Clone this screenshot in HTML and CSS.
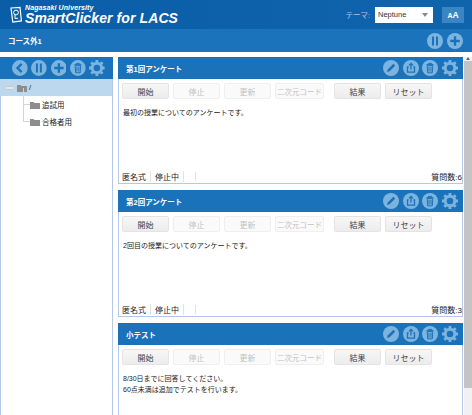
FILE: index.html
```html
<!DOCTYPE html>
<html lang="ja">
<head>
    <meta charset="UTF-8">
    <title>SmartClicker for LACS</title>
    <link rel="stylesheet" href="styles.css">
</head>
<body>
    <svg class="defs" width="0" height="0">
        <symbol id="i-back" viewBox="0 0 16 16">
            <circle cx="8" cy="8" r="8" fill="#7db4de"/>
            <path d="M9.8 3.8 5.6 8l4.2 4.2" fill="none" stroke="#1a72bb" stroke-width="2.4"/>
        </symbol>
        <symbol id="i-pause" viewBox="0 0 16 16">
            <circle cx="8" cy="8" r="8" fill="#7db4de"/>
            <path d="M6 3.5v9M10 3.5v9" fill="none" stroke="#1a72bb" stroke-width="2"/>
        </symbol>
        <symbol id="i-plus" viewBox="0 0 16 16">
            <circle cx="8" cy="8" r="8" fill="#7db4de"/>
            <path d="M8 3.2v9.6M3.2 8h9.6" fill="none" stroke="#1a72bb" stroke-width="2.4"/>
        </symbol>
        <symbol id="i-trash" viewBox="0 0 16 16">
            <circle cx="8" cy="8" r="8" fill="#7db4de"/>
            <path d="M4.5 4.6h7M6.5 4.4V3.4h3v1M5.2 5.6l.5 7.2h4.6l.5-7.2zM7 6.8v4.8M9 6.8v4.8" fill="none" stroke="#1a72bb" stroke-width="1"/>
        </symbol>
        <symbol id="i-gear" viewBox="0 0 16 16">
            <circle cx="8" cy="8" r="4.8" fill="none" stroke="#7db4de" stroke-width="3"/>
            <path d="M8 0v3.5M8 12.5V16M0 8h3.5M12.5 8H16M2.3 2.3l2.5 2.5M11.2 11.2l2.5 2.5M2.3 13.7l2.5-2.5M11.2 4.8l2.5-2.5" fill="none" stroke="#7db4de" stroke-width="2.8"/>
        </symbol>
        <symbol id="i-edit" viewBox="0 0 16 16">
            <circle cx="8" cy="8" r="8" fill="#7db4de"/>
            <path d="M4 12l.7-2.6 5.6-5.6 1.9 1.9-5.6 5.6z" fill="#1a72bb"/>
        </symbol>
        <symbol id="i-share" viewBox="0 0 16 16">
            <circle cx="8" cy="8" r="8" fill="#7db4de"/>
            <path d="M5.6 7H4.5v5.2h7V7h-1.1M8 9.5V3.6M6 5.4l2-2 2 2" fill="none" stroke="#1a72bb" stroke-width="1.3"/>
        </symbol>
        <symbol id="i-folder" viewBox="0 0 10 8">
            <path d="M0 1h3.5l1 1H10v6H0z" fill="#8d8d8d"/>
        </symbol>
    </svg>

    <header class="top-bar">
        <div class="logo">
            <svg class="logo-icon" viewBox="0 0 14 17">
                <path d="M2 1.5 11 .8l1.4 13.6-8.6 1.2z" fill="#0d5fa8" stroke="#fff" stroke-width="1.2"/>
                <circle cx="7" cy="6" r="2.4" fill="none" stroke="#fff"/>
                <path d="M6 8v4l3-.3" fill="none" stroke="#fff"/>
            </svg>
            <div class="logo-text">
                <div class="logo-small">Nagasaki University</div>
                <div class="logo-big">SmartClicker for LACS</div>
            </div>
        </div>
        <div class="theme">
            <span class="theme-label">テーマ:</span>
            <div class="theme-select">Neptune<span class="caret"></span></div>
            <div class="font-btn"><small>A</small>A</div>
        </div>
    </header>

    <div class="course-bar">
        <span class="course-title">コース外1</span>
        <div class="icons">
            <svg class="icon"><use href="#i-pause"/></svg>
            <svg class="icon"><use href="#i-plus"/></svg>
        </div>
    </div>

    <div class="main">
        <aside class="side">
            <div class="side-head">
                <svg class="icon"><use href="#i-back"/></svg>
                <svg class="icon"><use href="#i-pause"/></svg>
                <svg class="icon"><use href="#i-plus"/></svg>
                <svg class="icon"><use href="#i-trash"/></svg>
                <svg class="icon"><use href="#i-gear"/></svg>
            </div>
            <div class="tree-root">
                <span class="minus"></span>
                <svg class="folder"><use href="#i-folder"/></svg>
                <span>/</span>
            </div>
            <div class="tree-row">
                <span class="branch"></span>
                <svg class="folder"><use href="#i-folder"/></svg>
                <span>追試用</span>
            </div>
            <div class="tree-row">
                <span class="branch"></span>
                <svg class="folder"><use href="#i-folder"/></svg>
                <span>合格者用</span>
            </div>
        </aside>

        <div class="list">
            <section class="card">
                <div class="card-head">
                    <span class="card-title">第1回アンケート</span>
                    <div class="icons">
                        <svg class="icon"><use href="#i-edit"/></svg>
                        <svg class="icon"><use href="#i-share"/></svg>
                        <svg class="icon"><use href="#i-trash"/></svg>
                        <svg class="icon"><use href="#i-gear"/></svg>
                    </div>
                </div>
                <div class="toolbar">
                    <button class="btn">開始</button>
                    <button class="btn off">停止</button>
                    <button class="btn off">更新</button>
                    <button class="btn off wide">二次元コード</button>
                    <button class="btn">結果</button>
                    <button class="btn">リセット</button>
                </div>
                <div class="card-text">最初の授業についてのアンケートです。</div>
                <div class="card-foot">
                    <span class="foot-item">匿名式</span>
                    <span class="foot-item">停止中</span>
                    <span class="foot-item empty"></span>
                    <span class="count">質問数:6</span>
                </div>
            </section>

            <section class="card">
                <div class="card-head">
                    <span class="card-title">第2回アンケート</span>
                    <div class="icons">
                        <svg class="icon"><use href="#i-edit"/></svg>
                        <svg class="icon"><use href="#i-share"/></svg>
                        <svg class="icon"><use href="#i-trash"/></svg>
                        <svg class="icon"><use href="#i-gear"/></svg>
                    </div>
                </div>
                <div class="toolbar">
                    <button class="btn">開始</button>
                    <button class="btn off">停止</button>
                    <button class="btn off">更新</button>
                    <button class="btn off wide">二次元コード</button>
                    <button class="btn">結果</button>
                    <button class="btn">リセット</button>
                </div>
                <div class="card-text">2回目の授業についてのアンケートです。</div>
                <div class="card-foot">
                    <span class="foot-item">匿名式</span>
                    <span class="foot-item">停止中</span>
                    <span class="foot-item empty"></span>
                    <span class="count">質問数:3</span>
                </div>
            </section>

            <section class="card">
                <div class="card-head">
                    <span class="card-title">小テスト</span>
                    <div class="icons">
                        <svg class="icon"><use href="#i-edit"/></svg>
                        <svg class="icon"><use href="#i-share"/></svg>
                        <svg class="icon"><use href="#i-trash"/></svg>
                        <svg class="icon"><use href="#i-gear"/></svg>
                    </div>
                </div>
                <div class="toolbar">
                    <button class="btn">開始</button>
                    <button class="btn off">停止</button>
                    <button class="btn off">更新</button>
                    <button class="btn off wide">二次元コード</button>
                    <button class="btn">結果</button>
                    <button class="btn">リセット</button>
                </div>
                <div class="card-text">8/30日までに回答してください。<br>60点未満は追加でテストを行います。</div>
            </section>
        </div>

        <div class="scrollbar">
            <span class="arrow"></span>
            <div class="thumb"></div>
        </div>
    </div>
</body>
</html>
```

FILE: styles.css
```css
html, body {
    margin: 0;
    height: 415px;
    overflow: hidden;
}

body {
    display: flex;
    flex-direction: column;
    background: #fff;
    color: #222;
    font-family: "Liberation Sans", "Noto Sans CJK JP", sans-serif;
    font-size: 7px;
}

.defs {
    display: none;
}

.top-bar {
    height: 29px;
    flex: none;
    display: flex;
    justify-content: space-between;
    align-items: center;
    background: linear-gradient(90deg, #0a5ea8, #0f64ac);
    color: #fff;
}

.logo {
    display: flex;
    align-items: center;
    margin-left: 9px;
    gap: 2px;
}

.logo-icon {
    width: 14px;
    height: 18px;
}

.logo-text {
    font-style: italic;
    font-weight: bold;
}

.logo-small {
    font-size: 7px;
    line-height: 8px;
    letter-spacing: 0.1px;
}

.logo-big {
    font-size: 14px;
    line-height: 13px;
    letter-spacing: 0.1px;
}

.theme {
    display: flex;
    align-items: center;
    margin-right: 8px;
}

.theme-label {
    color: #a9c8e6;
    font-size: 7.5px;
    margin-right: 5px;
}

.theme-select {
    width: 55px;
    height: 16px;
    margin-right: 9px;
    padding-left: 3px;
    background: #fff;
    color: #333;
    font-size: 7.5px;
    line-height: 16px;
    position: relative;
}

.caret {
    position: absolute;
    right: 5px;
    top: 6px;
    border: 3px solid transparent;
    border-top: 4px solid #8a8a8a;
}

.font-btn {
    width: 22px;
    height: 16px;
    background: #3a86c4;
    color: #fff;
    font-weight: bold;
    font-size: 8.5px;
    line-height: 16px;
    text-align: center;
}

.font-btn small {
    font-size: 7px;
}

.course-bar {
    height: 23px;
    flex: none;
    display: flex;
    justify-content: space-between;
    align-items: center;
    padding: 0 9px 0 8px;
    background: #1b73bb;
    color: #fff;
    font-size: 7.5px;
    font-weight: bold;
}

.icons {
    display: flex;
    gap: 3.7px;
}

.icon {
    width: 16px;
    height: 16px;
    display: block;
}

.main {
    flex: 1;
    min-height: 0;
    display: flex;
    margin-top: 5px;
}

.side {
    width: 113px;
    flex: none;
    box-sizing: border-box;
    border-right: 1px solid #b5c8e8;
    border-left: 1px solid #b5c8e8;
    font-size: 7.5px;
}

.side-head {
    height: 22px;
    margin: 0 -1px;
    padding: 0 8px 0 12px;
    display: flex;
    align-items: center;
    gap: 3.5px;
    background: #1a72bb;
}

.tree-root {
    height: 17px;
    margin-left: -1px;
    padding-left: 6px;
    display: flex;
    align-items: center;
    background: #bcd8ee;
    position: relative;
}

.tree-root::before {
    content: "";
    position: absolute;
    left: 9px;
    top: 0;
    height: 6px;
    border-left: 1px solid #d5d5d5;
}

.tree-root span:last-child {
    margin-left: 2px;
}

.minus {
    width: 7px;
    height: 4px;
    margin-right: 4px;
    background: #e6e6e6;
    border-top: 1px solid #c9c9c9;
    border-bottom: 1px solid #c9c9c9;
    box-sizing: border-box;
}

.folder {
    width: 10px;
    height: 8px;
    flex: none;
}

.tree-row {
    height: 17px;
    padding-left: 22px;
    display: flex;
    align-items: center;
}

.tree-row .folder {
    margin-right: 2px;
}

.branch {
    width: 7px;
    height: 17px;
    box-sizing: border-box;
    transform: translateY(-8px);
    border-left: 1px solid #d5d5d5;
    border-bottom: 1px solid #d5d5d5;
}

.list {
    flex: 1;
    min-width: 0;
    margin-left: 5px;
    display: flex;
    flex-direction: column;
    gap: 6px;
    overflow: hidden;
}

.card {
    height: 127px;
    flex: none;
    box-sizing: border-box;
    display: flex;
    flex-direction: column;
    border-left: 1px solid #b5c8e8;
    border-right: 1px solid #b5c8e8;
    border-bottom: 1px solid #b5c8e8;
}

.card-head {
    height: 22px;
    flex: none;
    margin: 0 -1px;
    padding: 0 5px 0 8px;
    display: flex;
    justify-content: space-between;
    align-items: center;
    background: #1a72bb;
}

.card-title {
    color: #fff;
    font-size: 7.5px;
    font-weight: bold;
}

.toolbar {
    display: flex;
    gap: 4px;
    padding: 4px 0 0 3px;
}

.btn {
    width: 47px;
    height: 16px;
    padding: 0;
    border: 1px solid #e4e4e4;
    border-radius: 2px;
    background: linear-gradient(#f7f7f7, #ececec);
    color: #444;
    font: 8px "Liberation Sans", "Noto Sans CJK JP", sans-serif;
}

.btn.off {
    background: #fafafa;
    border-color: #efefef;
    color: #c2c2c2;
}

.btn.wide {
    width: 49px;
    margin-right: 6px;
    font-size: 7.5px;
}

.card-text {
    flex: 1;
    padding: 8px 0 0 4px;
    line-height: 11px;
}

.card-foot {
    height: 13px;
    flex: none;
    display: flex;
    align-items: center;
    padding: 0 0 0 3px;
    font-size: 8px;
}

.foot-item {
    padding-right: 4px;
    margin-right: 4px;
    border-right: 1px solid #e2e2e2;
}

.foot-item.empty {
    height: 9px;
    padding-right: 7px;
}

.count {
    margin-left: auto;
}

.scrollbar {
    width: 8px;
    flex: none;
    margin-left: 1px;
    background: #f1f1f1;
}

.arrow {
    display: block;
    height: 3px;
    position: relative;
}

.arrow::before {
    content: "";
    position: absolute;
    left: 2px;
    top: -2px;
    border: 2px solid transparent;
    border-bottom: 3px solid #666;
}

.thumb {
    margin-top: 1px;
    height: 327px;
    background: #c4c4c4;
}
```
